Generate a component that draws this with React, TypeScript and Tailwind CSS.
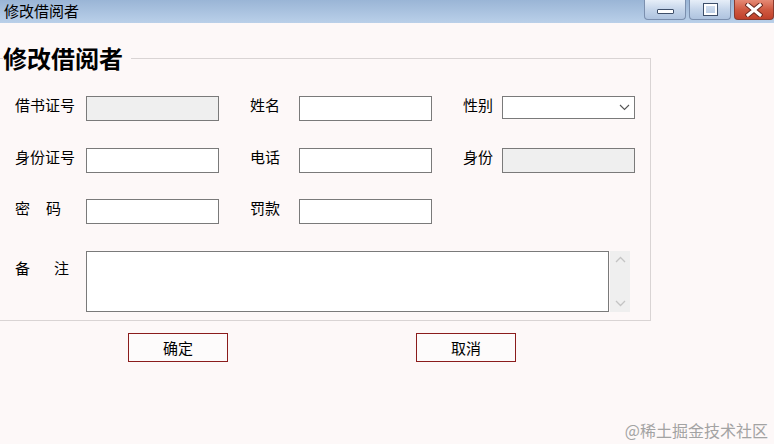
import React from 'react';

const font = { fontFamily: '"Noto Sans CJK SC", "Noto Sans", sans-serif' };

function Label({ text, w }: { text: React.ReactNode; w: string }) {
	return <div className={`${w} shrink-0 text-[15px] leading-[15px] pt-[1px] text-black`}>{text}</div>;
}

function Box({ gray }: { gray?: boolean }) {
	return <div className={`w-[133px] h-[25px] shrink-0 border border-[#7a7a7a] ${gray ? 'bg-[#efefef]' : 'bg-white'}`}></div>;
}

function WinBtn({ children, close }: { children: React.ReactNode; close?: boolean }) {
	return (
		<div
			className={`h-[20px] flex items-center justify-center rounded-b-[4px] border border-t-0 ${
				close
					? 'w-[40px] border-[#8a3a2e] bg-gradient-to-b from-[#e58a75] via-[#cf5a42] to-[#c0402a]'
					: 'w-[42px] border-[#7b8fae] bg-gradient-to-b from-[#e6eef8] via-[#c5d5ea] to-[#aec3df]'
			}`}
		>
			{children}
		</div>
	);
}

export default function App() {
	return (
		<div className="w-[774px] h-[444px] bg-[#fdf8f8] relative overflow-hidden" style={font}>
			{/* title bar */}
			<div className="h-[23px] flex justify-between bg-gradient-to-b from-[#9ab5d6] to-[#bad0e9]">
				<div className="pl-[4px] pt-[2px] text-[15px] leading-[17px] text-black">修改借阅者</div>
				<div className="flex gap-[3px] items-start">
					<WinBtn>
						<div className="w-[17px] h-[5px] bg-white border border-[#3e4f6a] rounded-[1px] mt-[4px]"></div>
					</WinBtn>
					<WinBtn>
						<div className="w-[13px] h-[11px] border-[2px] border-white outline outline-1 outline-[#3e4f6a] bg-transparent"></div>
					</WinBtn>
					<WinBtn close>
						<svg width="18" height="14" viewBox="0 0 18 14">
							<path d="M3 2 L15 12 M15 2 L3 12" stroke="#6b2a20" strokeWidth="5" strokeLinecap="square" />
							<path d="M3 2 L15 12 M15 2 L3 12" stroke="#ffffff" strokeWidth="3" strokeLinecap="square" />
						</svg>
					</WinBtn>
				</div>
			</div>

			{/* group box */}
			<div className="mt-[35px] w-[651px] h-[263px] border-t border-r border-b border-[#d9d4d4] relative pl-[15px] pt-[37px]">
				<div className="absolute left-[3px] top-[-15px] pr-[8px] bg-[#fdf8f8] text-[24px] leading-[28px] font-bold text-black">
					修改借阅者
				</div>

				<div className="flex items-start">
					<Label text="借书证号" w="w-[71px]" />
					<Box gray />
					<div className="w-[31px] shrink-0"></div>
					<Label text="姓名" w="w-[49px]" />
					<Box />
					<div className="w-[31px] shrink-0"></div>
					<Label text="性别" w="w-[39px]" />
					<div className="w-[133px] h-[23px] shrink-0 border border-[#7a7a7a] bg-white flex items-center justify-end pr-[4px]">
						<svg width="11" height="7" viewBox="0 0 11 7">
							<path d="M1 1 L5.5 5.5 L10 1" stroke="#555" strokeWidth="1.1" fill="none" />
						</svg>
					</div>
				</div>

				<div className="flex items-start mt-[27px]">
					<Label text="身份证号" w="w-[71px]" />
					<Box />
					<div className="w-[31px] shrink-0"></div>
					<Label text="电话" w="w-[49px]" />
					<Box />
					<div className="w-[31px] shrink-0"></div>
					<Label text="身份" w="w-[39px]" />
					<Box gray />
				</div>

				<div className="flex items-start mt-[26px]">
					<Label text={<span className="flex gap-[16px]"><span>密</span><span>码</span></span>} w="w-[71px]" />
					<Box />
					<div className="w-[31px] shrink-0"></div>
					<Label text="罚款" w="w-[49px]" />
					<Box />
				</div>

				<div className="flex items-start mt-[27px]">
					<div className="w-[71px] shrink-0 pt-[9px] text-[15px] leading-[15px] flex gap-[24px]">
						<span>备</span>
						<span>注</span>
					</div>
					<div className="w-[523px] h-[61px] shrink-0 border border-[#7a7a7a] bg-white"></div>
					<div className="w-[20px] h-[61px] ml-[1px] bg-[#efefef] flex flex-col justify-between items-center py-[5px]">
						<svg width="11" height="7" viewBox="0 0 11 7">
							<path d="M1 6 L5.5 1.5 L10 6" stroke="#c4c4c4" strokeWidth="1.3" fill="none" />
						</svg>
						<svg width="11" height="7" viewBox="0 0 11 7">
							<path d="M1 1 L5.5 5.5 L10 1" stroke="#c4c4c4" strokeWidth="1.3" fill="none" />
						</svg>
					</div>
				</div>
			</div>

			{/* buttons */}
			<div className="flex mt-[12px] pl-[128px] gap-[188px]">
				<button className="w-[100px] h-[29px] border border-[#8b1c1c] bg-[#fdfbfb] text-[15px] leading-[15px] text-black">确定</button>
				<button className="w-[100px] h-[29px] border border-[#8b1c1c] bg-[#fdfbfb] text-[15px] leading-[15px] text-black">取消</button>
			</div>

			<div className="absolute right-[6px] bottom-[5px] text-[16px] leading-[18px] text-[#a3a3a3]">@稀土掘金技术社区</div>
		</div>
	);
}
